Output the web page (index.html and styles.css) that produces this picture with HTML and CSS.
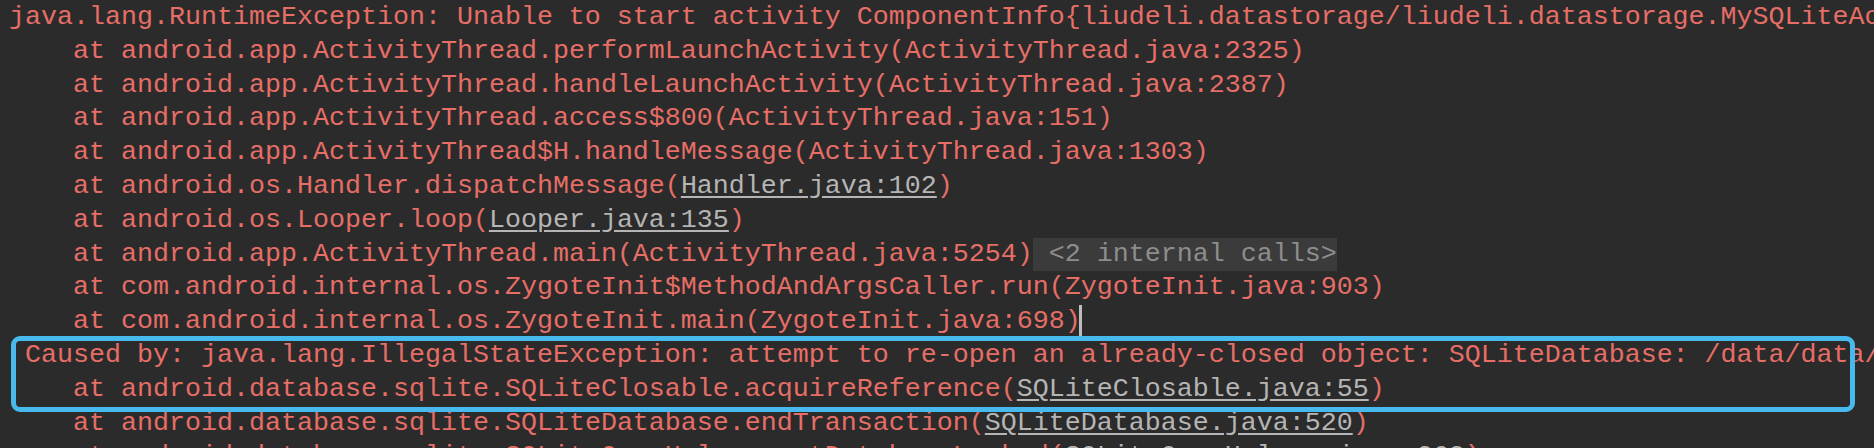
FILE: index.html
```html
<!DOCTYPE html>
<html lang="en">
<head>
    <meta charset="UTF-8">
    <meta name="viewport" content="width=device-width, initial-scale=1.0">
    <title>Logcat - RuntimeException</title>
    <link rel="stylesheet" href="styles.css">
</head>
<body>
    <div class="console">
        <div class="line">java.lang.RuntimeException: Unable to start activity ComponentInfo{liudeli.datastorage/liudeli.datastorage.MySQLiteActivity}: java.lang.IllegalStateException</div>
        <div class="line frame">at android.app.ActivityThread.performLaunchActivity(ActivityThread.java:2325)</div>
        <div class="line frame">at android.app.ActivityThread.handleLaunchActivity(ActivityThread.java:2387)</div>
        <div class="line frame">at android.app.ActivityThread.access$800(ActivityThread.java:151)</div>
        <div class="line frame">at android.app.ActivityThread$H.handleMessage(ActivityThread.java:1303)</div>
        <div class="line frame">at android.os.Handler.dispatchMessage(<a class="src" href="#">Handler.java:102</a>)</div>
        <div class="line frame">at android.os.Looper.loop(<a class="src" href="#">Looper.java:135</a>)</div>
        <div class="line frame">at android.app.ActivityThread.main(ActivityThread.java:5254)<span class="folded"> &lt;2 internal calls&gt;</span></div>
        <div class="line frame">at com.android.internal.os.ZygoteInit$MethodAndArgsCaller.run(ZygoteInit.java:903)</div>
        <div class="line frame">at com.android.internal.os.ZygoteInit.main(ZygoteInit.java:698)<span class="caret"></span></div>

        <!-- the two lines that matter -->
        <div class="highlight">
            <div class="line cause">Caused by: java.lang.IllegalStateException: attempt to re-open an already-closed object: SQLiteDatabase: /data/data/liudeli.datastorage/databases/test.db</div>
            <div class="line frame">at android.database.sqlite.SQLiteClosable.acquireReference(<a class="src" href="#">SQLiteClosable.java:55</a>)</div>
        </div>

        <div class="line frame">at android.database.sqlite.SQLiteDatabase.endTransaction(<a class="src" href="#">SQLiteDatabase.java:520</a>)</div>
        <div class="line frame">at android.database.sqlite.SQLiteOpenHelper.getDatabaseLocked(<a class="src" href="#">SQLiteOpenHelper.java:268</a>)</div>
    </div>
</body>
</html>
```

FILE: styles.css
```css
html, body {
    margin: 0;
    padding: 0;
    background: #2b2b2b;
    overflow: hidden;
}
.console {
    padding: 1px 0 0 9px;
    font-family: 'Liberation Mono', 'Courier New', monospace;
    font-size: 26.66px;
    line-height: 33.8px;
    color: #e66e67;
}
.line {
    white-space: pre;
    height: 33.8px;
}
.frame {
    padding-left: 64px;
}
.cause {
    padding-left: 16px;
}
.src {
    color: #b5b5b5;
    text-decoration: underline;
    text-underline-offset: 3px;
}
.folded {
    display: inline-block;
    background: #3b3b3b;
    color: #8d8d8d;
    white-space: pre;
}
.caret {
    display: inline-block;
    width: 3px;
    height: 33.8px;
    margin-left: -2px;
    background: #bdbdbd;
    vertical-align: top;
}
.highlight {
    position: relative;
    margin-left: -9px;
    padding-left: 9px;
}
.highlight::after {
    content: "";
    position: absolute;
    top: -3px;
    bottom: -5px;
    left: 11px;
    right: 19px;
    border: 5px solid #48b9ec;
    border-radius: 9px;
}
```
